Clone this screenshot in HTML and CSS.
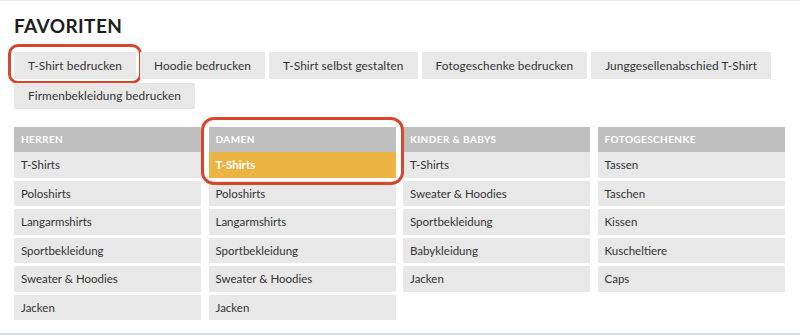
FILE: index.html
```html
<!DOCTYPE html>
<html lang="de">
<head>
    <meta charset="UTF-8">
    <meta name="viewport" content="width=device-width, initial-scale=1.0">
    <title>Favoriten</title>
    <link rel="stylesheet" href="styles.css">
</head>
<body>

    <div class="favoriten">

        <h1>Favoriten</h1>

        <div class="tags">
            <a class="tag marked" href="#">T-Shirt bedrucken</a>
            <a class="tag" href="#">Hoodie bedrucken</a>
            <a class="tag" href="#">T-Shirt selbst gestalten</a>
            <a class="tag" href="#">Fotogeschenke bedrucken</a>
            <a class="tag" href="#">Junggesellenabschied T-Shirt</a>
            <a class="tag" href="#">Firmenbekleidung bedrucken</a>
        </div>

        <div class="menu">
            <ul class="col">
                <li class="head">Herren</li>
                <li><a href="#">T-Shirts</a></li>
                <li><a href="#">Poloshirts</a></li>
                <li><a href="#">Langarmshirts</a></li>
                <li><a href="#">Sportbekleidung</a></li>
                <li><a href="#">Sweater &amp; Hoodies</a></li>
                <li><a href="#">Jacken</a></li>
            </ul>
            <ul class="col">
                <li class="marked-group">
                    <div class="head">Damen</div>
                    <a class="active" href="#">T-Shirts</a>
                </li>
                <li><a href="#">Poloshirts</a></li>
                <li><a href="#">Langarmshirts</a></li>
                <li><a href="#">Sportbekleidung</a></li>
                <li><a href="#">Sweater &amp; Hoodies</a></li>
                <li><a href="#">Jacken</a></li>
            </ul>
            <ul class="col">
                <li class="head">Kinder &amp; Babys</li>
                <li><a href="#">T-Shirts</a></li>
                <li><a href="#">Sweater &amp; Hoodies</a></li>
                <li><a href="#">Sportbekleidung</a></li>
                <li><a href="#">Babykleidung</a></li>
                <li><a href="#">Jacken</a></li>
            </ul>
            <ul class="col">
                <li class="head">Fotogeschenke</li>
                <li><a href="#">Tassen</a></li>
                <li><a href="#">Taschen</a></li>
                <li><a href="#">Kissen</a></li>
                <li><a href="#">Kuscheltiere</a></li>
                <li><a href="#">Caps</a></li>
            </ul>
        </div>

    </div>

</body>
</html>
```

FILE: styles.css
```css
html {
  box-sizing: border-box;
}

*, *:before, *:after {
  box-sizing: inherit;
}

body {
  margin: 0;
  font-family: 'Lato', 'Noto Sans', sans-serif;
  background: white;
  color: #333;
  border-top: 1px solid #e6e6e6;
  border-bottom: 2px solid #d8e0e4;
  min-height: 335px;
}

.favoriten {
  padding: 15px 14px 0 14px;
}

h1 {
  margin: 0 0 16px 0;
  font-size: 19px;
  line-height: 20px;
  font-weight: 700;
  text-transform: uppercase;
  letter-spacing: 0.4px;
  color: #1d1d1d;
}

.tags {
  display: flex;
  flex-wrap: wrap;
  gap: 4px;
  width: 770px;
}

.tag {
  display: block;
  height: 27px;
  line-height: 27px;
  padding: 0 14px;
  background: #e8e8e8;
  color: #333;
  font-size: 11.8px;
  letter-spacing: 0.1px;
  text-decoration: none;
  position: relative;
}

.tags .tag:nth-child(n+6) {
  height: 26px;
  line-height: 26px;
}

.tag.marked:after,
.marked-group:after {
  content: '';
  position: absolute;
  border: 3px solid #d8472c;
  pointer-events: none;
}

.tag.marked:after {
  top: -8px;
  left: -6px;
  right: -6px;
  bottom: -5px;
  border-radius: 10px;
}

.menu {
  display: grid;
  grid-template-columns: repeat(4, 187px);
  column-gap: 7.5px;
  margin-top: 18px;
}

.col {
  list-style: none;
  margin: 0;
  padding: 0;
  display: flex;
  flex-direction: column;
  gap: 3px;
}

.col .head {
  height: 25px;
  line-height: 25px;
  padding: 0 7px;
  background: #bfbfbf;
  color: white;
  font-size: 10px;
  font-weight: 700;
  text-transform: uppercase;
  letter-spacing: 0.4px;
}

.col li.head {
  margin-bottom: -3px;
}

.col a {
  display: block;
  height: 25.5px;
  line-height: 25.5px;
  padding: 0 7px;
  background: #e8e8e8;
  color: #333;
  font-size: 11.5px;
  text-decoration: none;
}

.col a.active {
  background: #ecb443;
  color: white;
  font-weight: 700;
}

.marked-group {
  position: relative;
}

.marked-group:after {
  top: -10px;
  left: -8px;
  right: -8px;
  bottom: -7px;
  border-radius: 13px;
}
```
